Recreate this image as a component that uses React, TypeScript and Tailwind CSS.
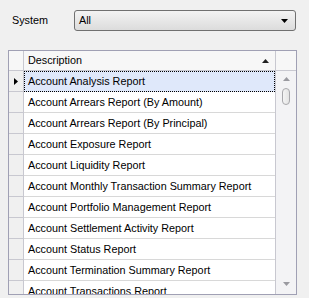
const reports = [
  'Account Analysis Report',
  'Account Arrears Report (By Amount)',
  'Account Arrears Report (By Principal)',
  'Account Exposure Report',
  'Account Liquidity Report',
  'Account Monthly Transaction Summary Report',
  'Account Portfolio Management Report',
  'Account Settlement Activity Report',
  'Account Status Report',
  'Account Termination Summary Report',
  'Account Transactions Report',
];

function TriUp({ className }: { className?: string }) {
  return (
    <svg width="7" height="4" viewBox="0 0 7 4" className={className}>
      <path d="M3.5 0L7 4H0z" fill="currentColor" />
    </svg>
  );
}

function TriDown({ className }: { className?: string }) {
  return (
    <svg width="7" height="4" viewBox="0 0 7 4" className={className}>
      <path d="M0 0h7L3.5 4z" fill="currentColor" />
    </svg>
  );
}

export default function App() {
  return (
    <div
      className="w-[309px] h-[298px] bg-[#f0f0f0] text-[10.8px] text-black overflow-hidden whitespace-nowrap"
      style={{ fontFamily: 'Tahoma, "Liberation Sans", sans-serif' }}
    >
      <div className="flex items-center h-[21px] mt-[10px]">
        <span className="w-[74px] pl-[12px]">System</span>
        <div className="w-[222px] h-[21px] flex items-center justify-between pl-[4px] pr-[7px] rounded-[3px] border border-[#707070] bg-gradient-to-b from-[#f3f3f3] to-[#dcdcdc]">
          <span>All</span>
          <TriDown className="text-black" />
        </div>
      </div>

      <div className="mt-[19px] ml-[8px] w-[289px] h-[245px] border border-[#a0a0b4] bg-[#f0f0f0] overflow-hidden flex flex-col">
        <div className="flex h-[20px] shrink-0 border-b border-[#c8c8d0] bg-[#f7f7f7]">
          <div className="w-[15px] border-r border-[#c8c8d0]" />
          <div className="w-[252px] flex items-center justify-between pl-[4px] pr-[6px] border-r border-[#c8c8d0]">
            <span>Description</span>
            <TriUp className="text-[#202020]" />
          </div>
          <div className="flex-1" />
        </div>
        <div className="flex flex-1 min-h-0">
          <div className="w-[15px] shrink-0 border-r border-[#c8c8d0] flex flex-col">
            {reports.map((r, i) => (
              <div key={r} className="h-[21px] shrink-0 border-b border-[#c8c8d0] flex items-center justify-center">
                {i === 0 && (
                  <svg width="4" height="7" viewBox="0 0 4 7">
                    <path d="M0 0L4 3.5L0 7z" fill="#000" />
                  </svg>
                )}
              </div>
            ))}
          </div>
          <div className="w-[252px] shrink-0 border-r border-[#c8c8d0] bg-white flex flex-col">
            {reports.map((r, i) => (
              <div
                key={r}
                className={
                  i === 0
                    ? 'h-[21px] shrink-0 flex items-center pl-[3px] bg-[#dfe8fa] border border-dotted border-black'
                    : 'h-[21px] shrink-0 flex items-center pl-[4px] border-b border-[#d8d8d8]'
                }
              >
                {r}
              </div>
            ))}
          </div>
          <div className="flex-1 bg-[#f3f3f5] flex flex-col items-center pt-[6px] pb-[8px]">
            <TriUp className="text-[#9a9aa0]" />
            <div className="mt-[7px] w-[8px] h-[17px] rounded-[4px] border border-[#a8a8ac] bg-gradient-to-r from-[#f4f4f4] to-[#e4e4e4]" />
            <div className="flex-1" />
            <TriDown className="text-[#9a9aa0]" />
          </div>
        </div>
      </div>
    </div>
  );
}
